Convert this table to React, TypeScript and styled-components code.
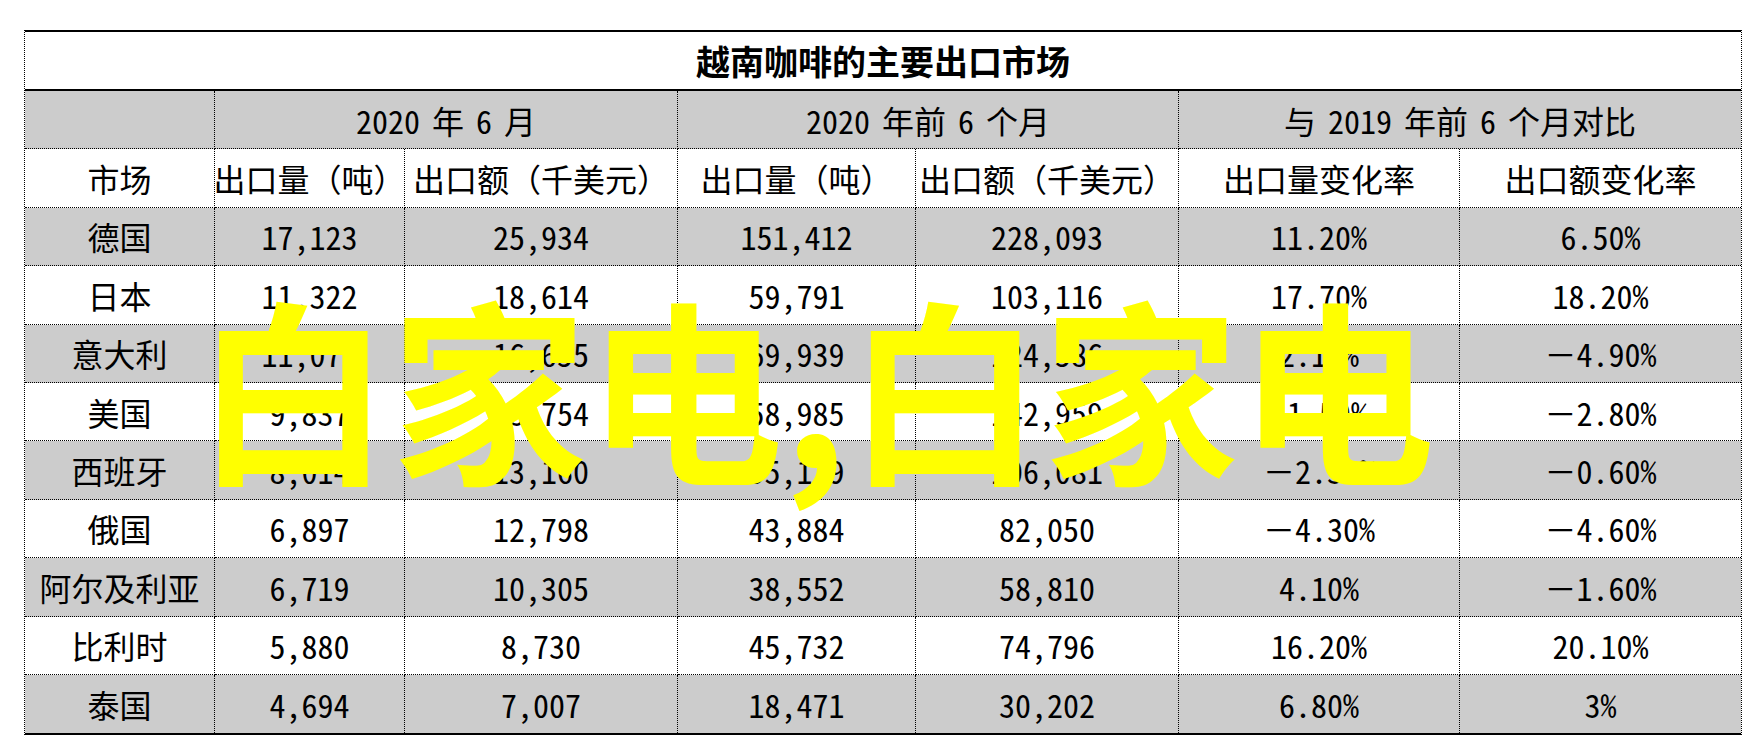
import React from 'react'
import styled, { createGlobalStyle } from 'styled-components'

const GlobalStyle = createGlobalStyle`
  html, body {
    margin: 0;
    padding: 0;
    background: #fff;
  }
`

const Page = styled.div`
  position: relative;
  width: 1760px;
  height: 746px;
  box-sizing: border-box;
  padding: 30px 0 0 24px;
  overflow: hidden;
  background: #fff;
  font-family: 'Noto Sans Mono CJK SC', 'Noto Sans CJK SC', sans-serif;
  color: #000;
`

const Table = styled.div`
  display: grid;
  grid-template-columns: 190px 190px 273px 238px 263px 281px 281px;
  grid-template-rows: 59px repeat(11, 58.4px);
  width: 1716px;
  border-top: 2px solid #000;
  border-bottom: 2px solid #000;
  border-left: 1px dotted #000;
  border-right: 1px dotted #000;
`

const Title = styled.div`
  grid-column: 1 / -1;
  display: flex;
  align-items: center;
  justify-content: center;
  border-bottom: 2px solid #000;
  font-family: 'Noto Sans CJK SC', sans-serif;
  font-size: 34px;
  font-weight: 700;
`

const Cell = styled.div<{ $gray?: boolean; $span?: number; $last?: boolean; $bottom?: boolean }>`
  grid-column: span ${(p) => p.$span ?? 1};
  display: flex;
  align-items: center;
  justify-content: center;
  white-space: nowrap;
  font-size: 32px;
  background: ${(p) => (p.$gray ? '#cccccc' : '#ffffff')};
  border-right: ${(p) => (p.$last ? 'none' : '1px dotted #000')};
  border-bottom: ${(p) => (p.$bottom ? 'none' : '1px dotted #000')};
`

const GroupLabel = styled.span`
  word-spacing: -4px;
`

const Watermark = styled.div`
  position: absolute;
  left: 195px;
  top: 286px;
  font-family: 'Noto Sans CJK SC', sans-serif;
  font-size: 196px;
  font-weight: 700;
  line-height: 1;
  color: #ffff00;
  white-space: nowrap;
  pointer-events: none;
`

const groups = ['2020 年 6 月', '2020 年前 6 个月', '与 2019 年前 6 个月对比']

const heads = [
  '市场',
  '出口量（吨）',
  '出口额（千美元）',
  '出口量（吨）',
  '出口额（千美元）',
  '出口量变化率',
  '出口额变化率',
]

// negative rates use the full-width minus, as in the sheet
const rows = [
  ['德国', '17,123', '25,934', '151,412', '228,093', '11.20%', '6.50%'],
  ['日本', '11,322', '18,614', '59,791', '103,116', '17.70%', '18.20%'],
  ['意大利', '11,071', '16,655', '69,939', '124,586', '2.10%', '－4.90%'],
  ['美国', '9,837', '13,754', '58,985', '142,959', '11.50%', '－2.80%'],
  ['西班牙', '8,014', '13,160', '55,119', '106,081', '－2.30%', '－0.60%'],
  ['俄国', '6,897', '12,798', '43,884', '82,050', '－4.30%', '－4.60%'],
  ['阿尔及利亚', '6,719', '10,305', '38,552', '58,810', '4.10%', '－1.60%'],
  ['比利时', '5,880', '8,730', '45,732', '74,796', '16.20%', '20.10%'],
  ['泰国', '4,694', '7,007', '18,471', '30,202', '6.80%', '3%'],
]

export default function App() {
  return (
    <>
      <GlobalStyle />
      <Page>
        <Table>
          <Title>越南咖啡的主要出口市场</Title>

          <Cell $gray />
          {groups.map((g, i) => (
            <Cell key={g} $gray $span={2} $last={i === groups.length - 1}>
              <GroupLabel>{g}</GroupLabel>
            </Cell>
          ))}

          {heads.map((h, i) => (
            <Cell key={i} $last={i === heads.length - 1}>
              {h}
            </Cell>
          ))}

          {rows.map((r, ri) =>
            r.map((v, ci) => (
              <Cell
                key={`${ri}-${ci}`}
                $gray={ri % 2 === 0}
                $last={ci === r.length - 1}
                $bottom={ri === rows.length - 1}
              >
                {v}
              </Cell>
            ))
          )}
        </Table>
        <Watermark>白家电,白家电</Watermark>
      </Page>
    </>
  )
}
